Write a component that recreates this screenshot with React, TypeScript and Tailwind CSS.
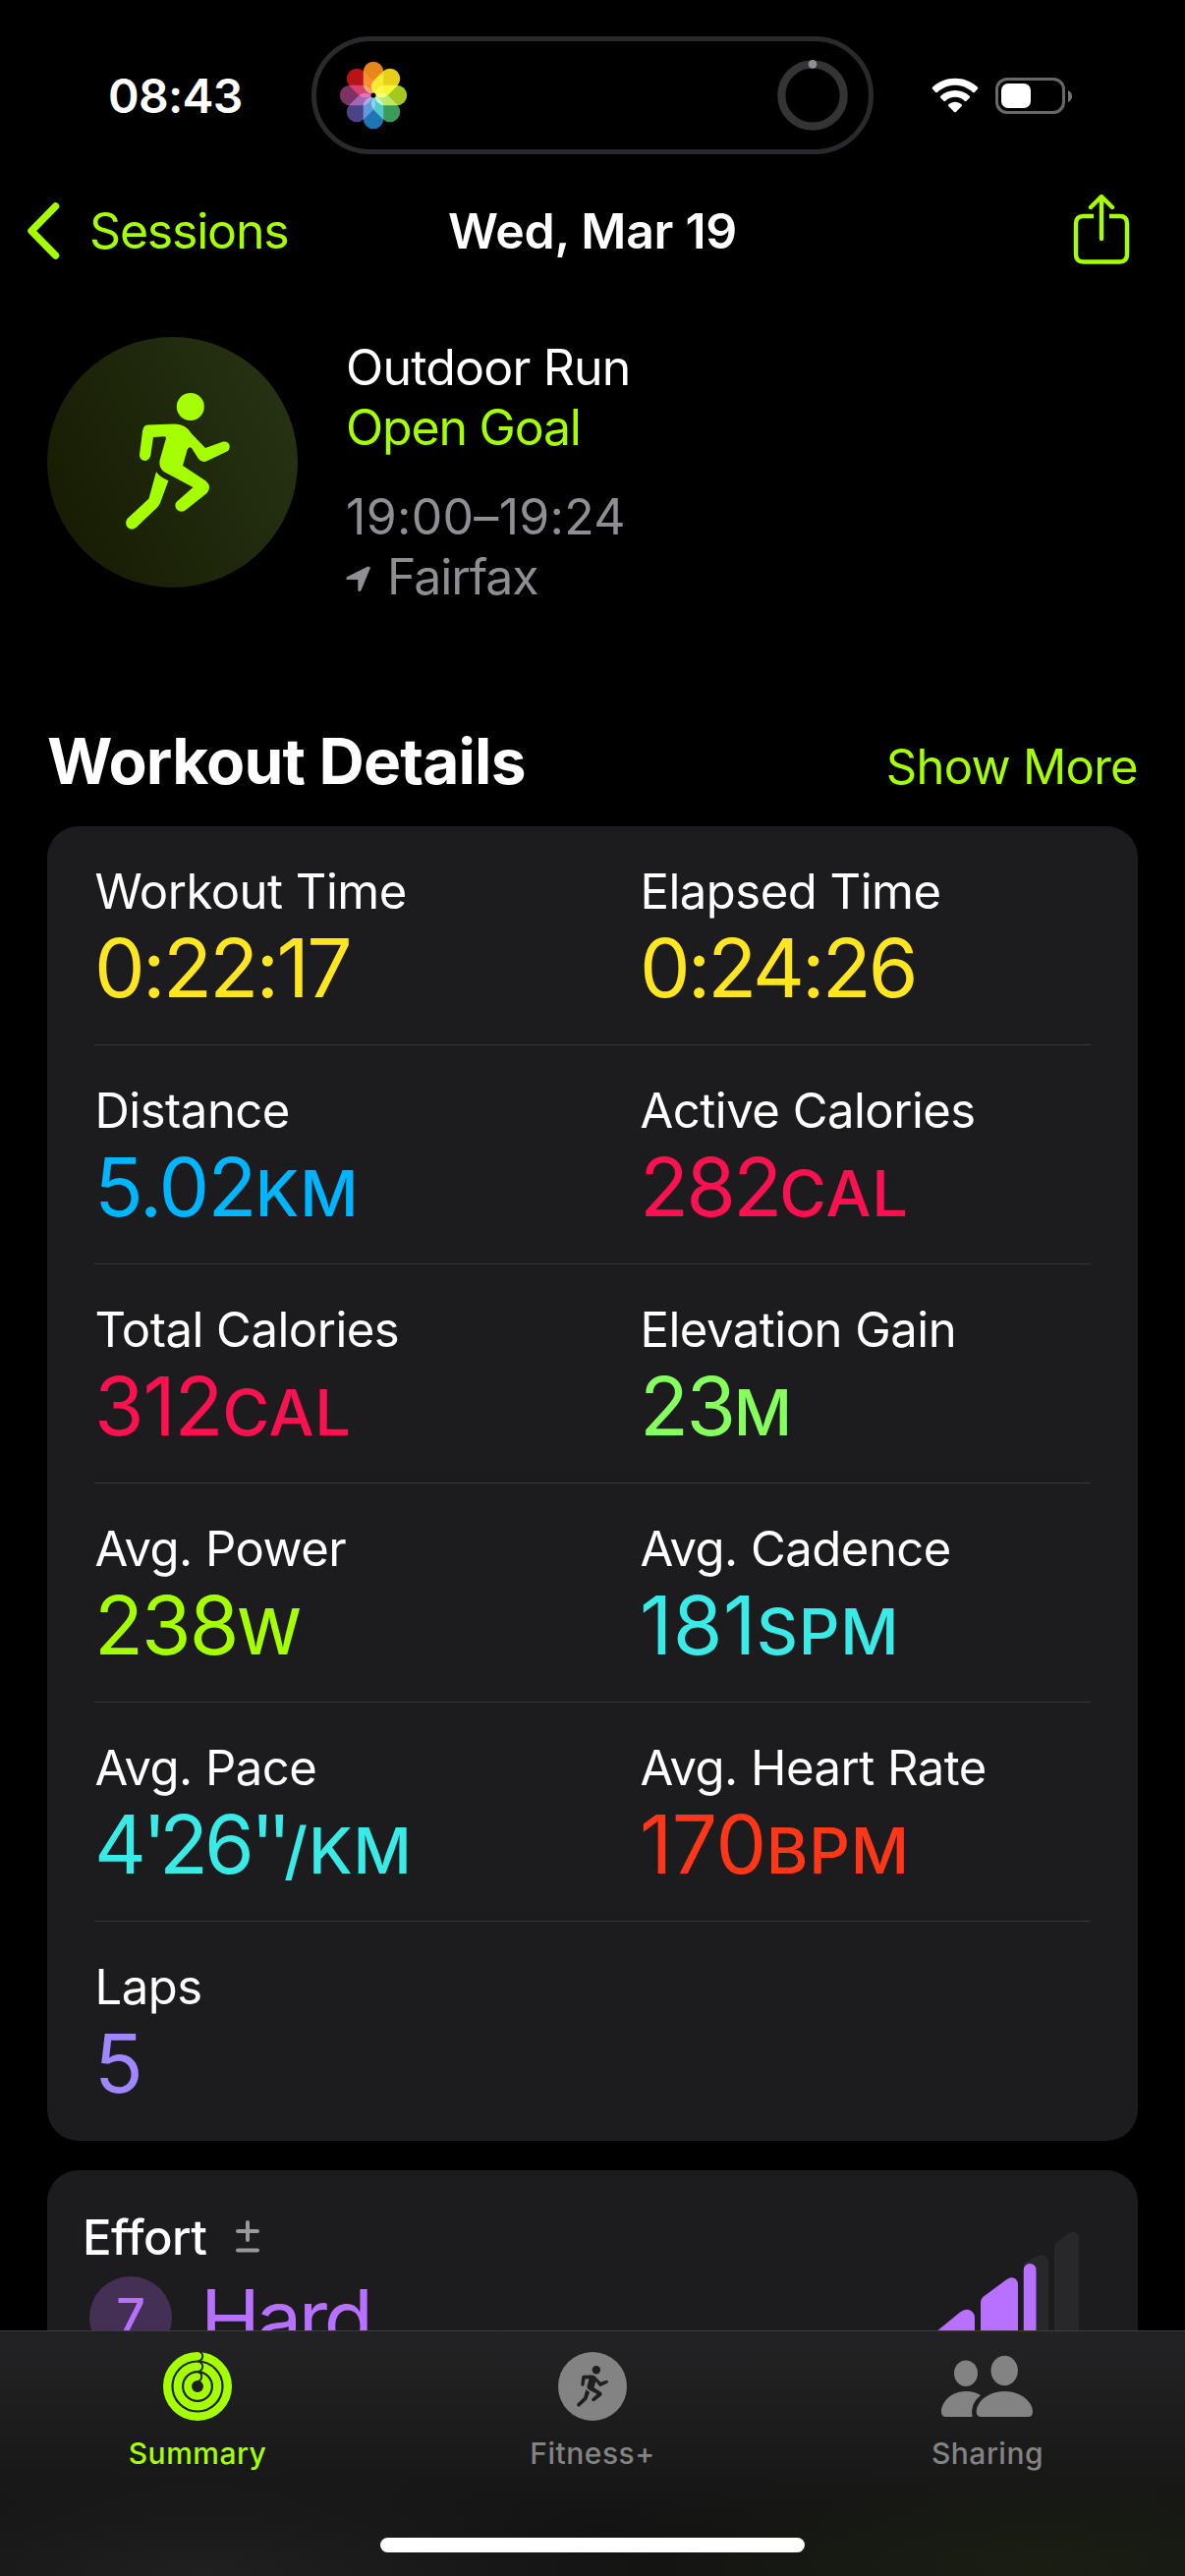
import clsx from "clsx"

const RUNNER_BODY = "M147 434 Q148 432.5 150 432.4 L178 431.5 Q189 431.5 195 441.5 L209 456 L227 449.6 Q232 448.500 233.500 453 Q234.500 457.500 231 459.500 L210 469.500 Q205 471 202 467 L195 456 Q192 454 190.500 458 L186 474 L209.500 489.500 Q216 495 210.500 502 L188.500 519.500 Q183 522.500 179.500 518 Q177 513.500 180 510.500 L196.500 496 L167.500 480.500 Q161 476 162.700 468 L169 446 Q169 444 167 444.200 L156 445 L153.200 464 Q151.500 469 147 469 Q142 468 142 463 L145 439 Q145.500 435.500 147 434 Z"
const RUNNER_LEG = "M159 480.300 Q163 486 171.400 489.300 L163 512 Q162 514.500 160 516.500 L138.500 537 Q134 540.500 130 537 Q126.500 532.500 129.500 528 L151.500 507.500 Z"

const metrics = [
    [
        { label: "Workout Time", value: "0:22:17", unit: "", color: "text-[#ffe620]", tracking: "tracking-[-2.7px]" },
        { label: "Elapsed Time", value: "0:24:26", unit: "", color: "text-[#ffe620]", tracking: "tracking-[-3px]" },
    ],
    [
        { label: "Distance", value: "5.02", unit: "KM", color: "text-[#00b5ff]", tracking: "tracking-[-1.8px]" },
        { label: "Active Calories", value: "282", unit: "CAL", color: "text-[#fa114f]", tracking: "tracking-[-2.8px]" },
    ],
    [
        { label: "Total Calories", value: "312", unit: "CAL", color: "text-[#fa114f]", tracking: "tracking-[-1.2px]" },
        { label: "Elevation Gain", value: "23", unit: "M", color: "text-[#86ff5e]", tracking: "tracking-[-2.5px]" },
    ],
    [
        { label: "Avg. Power", value: "238", unit: "W", color: "text-[#a6ff00]", tracking: "tracking-[-2px]" },
        { label: "Avg. Cadence", value: "181", unit: "SPM", color: "text-[#3aeae6]", tracking: "tracking-[0.5px]" },
    ],
    [
        { label: "Avg. Pace", value: "4'26''", unit: "/KM", color: "text-[#3aeae6]", tracking: "tracking-[-4px]" },
        { label: "Avg. Heart Rate", value: "170", unit: "BPM", color: "text-[#ff3718]", tracking: "tracking-[-0.5px]" },
    ],
    [
        { label: "Laps", value: "5", unit: "", color: "text-[#9f87ff]", tracking: "tracking-[-2px]" },
    ],
]

const petals = ["#e8861a", "#e8d01a", "#a5c820", "#3a9c58", "#1f74b4", "#4c4288", "#7c3262", "#b81418"]

function Runner(props: any) {
    return (
        <svg viewBox="128 400 106 140" className={props.className} fill="currentColor">
            <circle cx="193.800" cy="414" r="14" />
            <path d={RUNNER_BODY} />
            <path d={RUNNER_LEG} />
        </svg>
    )
}

function StatusBar() {
    return (
        <header className="flex h-[157px] pt-[37px]">
            <div className="w-[317px] pt-[32px] pl-[110px] text-[48px] leading-[58px] font-semibold tracking-[-0.7px]">08:43</div>
            <div className="flex h-[120px] w-[572px] items-center justify-between rounded-full border-[5px] border-[#2a2a2c] pr-[21px] pl-[23px]">
                <svg viewBox="-35 -35 70 70" className="size-[70px] isolate">
                    {petals.map((color, i) => (
                        <rect key={color} x="-10.300" y="-34.200" width="20.600" height="33" rx="10.300" fill={color}
                            transform={`rotate(${i * 45})`} className="mix-blend-screen" />
                    ))}
                    <circle r="2.500" fill="black" />
                </svg>
                <svg viewBox="-36 -36 72 72" className="size-[72px]" fill="none">
                    <circle r="31.700" stroke="#343435" strokeWidth="8.200" />
                    <circle cy="-31.700" r="4.400" fill="#8e8e93" />
                </svg>
            </div>
            <div className="flex pt-[42px] pl-[59px]">
                <svg viewBox="0 0 48 36" className="h-[36px] w-[48px]" fill="white">
                    <path d="M24 0.800 C33 0.800 41 4.200 47 9.800 Q47.800 10.700 47 11.600 L43.800 15 Q43 15.700 42.100 15 C37 10.200 30.700 7.700 24 7.700 C17.300 7.700 11 10.200 5.900 15 Q5 15.700 4.200 15 L1 11.600 Q0.200 10.700 1 9.800 C7 4.200 15 0.800 24 0.800 Z" />
                    <path d="M24 12.900 C29.600 12.900 34.800 15 38.800 18.700 Q39.700 19.600 38.800 20.500 L35.600 23.800 Q34.700 24.500 33.800 23.800 C31.100 21.300 27.700 19.800 24 19.800 C20.300 19.800 16.900 21.300 14.200 23.800 Q13.300 24.500 12.400 23.800 L9.200 20.500 Q8.300 19.600 9.200 18.700 C13.200 15 18.400 12.900 24 12.900 Z" />
                    <path d="M24 24.800 C26.500 24.800 28.800 25.700 30.600 27.200 Q31.500 28 30.700 28.900 L24.900 34.900 Q24 35.700 23.100 34.900 L17.300 28.900 Q16.500 28 17.400 27.200 C19.200 25.700 21.500 24.800 24 24.800 Z" />
                </svg>
                <div className="ml-[17px] flex h-[37px] w-[71px] rounded-[12px] border-[3px] border-[#686868] p-[3px]">
                    <div className="w-[30px] rounded-[7px] bg-white" />
                </div>
                <svg viewBox="0 0 4 12" className="mt-[13px] ml-[3px] h-[12px] w-[4px]"><path d="M0 0 Q4 2 4 6 Q4 10 0 12 Z" fill="#757575" /></svg>
            </div>
        </header>
    )
}

function NavBar() {
    return (
        <nav className="grid h-[155px] grid-cols-[400px_406px_400px] items-center text-[50px] leading-[60px]">
            <div className="flex items-center pl-[27px] text-[#a6ff00]">
                <svg viewBox="0 0 34 58" className="h-[58px] w-[34px]" fill="none">
                    <path d="M29.500 4 L5 29 L29.500 54" stroke="currentColor" strokeWidth="7.500" strokeLinecap="round" strokeLinejoin="round" />
                </svg>
                <span className="ml-[30px] tracking-[-1.2px]">Sessions</span>
            </div>
            <h1 className="text-center font-semibold tracking-[-0.3px]">Wed, Mar 19</h1>
            <svg viewBox="0 0 58 72" className="mb-[4px] ml-[286px] h-[72px] w-[58px] text-[#a6ff00]" fill="none" stroke="currentColor" strokeWidth="4.400">
                <path d="M21 23 H10.500 Q3 23 3 30.500 V62 Q3 69.500 10.500 69.500 H47.500 Q55 69.500 55 62 V30.500 Q55 23 47.500 23 H37" />
                <path d="M29 46 V3.500 M18 14 L29 3 L40 14" strokeLinecap="round" strokeLinejoin="round" />
            </svg>
        </nav>
    )
}

function WorkoutSummary() {
    return (
        <section className="mt-[31px] flex h-[255px] pl-[48px]">
            <div className="size-[255px] rounded-full bg-linear-[65deg] from-[#151900] to-[#283516] pt-[57px] pl-[80px]">
                <Runner className="h-[140px] w-[106px] text-[#a6ff00]" />
            </div>
            <div className="mt-[1px] ml-[49px] text-[50px] leading-[61px]">
                <p className="tracking-[-0.8px]">Outdoor Run</p>
                <p className="tracking-[-1.2px] text-[#a6ff00]">Open Goal</p>
                <p className="mt-[30px] tracking-[0.3px] text-[#8e8e93]">19:00–19:24</p>
                <p className="flex items-center text-[#8e8e93]">
                    <svg viewBox="0 0 25 26" className="mt-[3px] mr-[17px] h-[26px] w-[25px]" fill="currentColor">
                        <path d="M1.500 11 L22 0.800 Q25.500 0 24.500 3 L15.500 25 Q13.500 27.500 12.300 24.500 V14 H1.500 Q-1 13 1.500 11 Z" />
                    </svg>
                    <span className="tracking-[-1.1px]">Fairfax</span>
                </p>
            </div>
        </section>
    )
}

function Metric(props: any) {
    return (
        <div className="w-[555px] shrink-0 pt-[37px]">
            <h3 className="pl-[0.500px] text-[49px] leading-[60px] tracking-[-0.5px]">{props.label}</h3>
            <p className={clsx("flex items-baseline text-[82px] leading-[96px]", props.color, props.tracking)}>
                {/* prime marks sit tighter than the digits */}
                {props.value.split(/('+)/).filter(Boolean).map((part: string, i: number) => (
                    <span key={i} className={part.startsWith("'") ? "tracking-[-7.5px]" : ""}>{part}</span>
                ))}
                <span className="text-[65px] font-medium tracking-[0.8px]">{props.unit}</span>
            </p>
        </div>
    )
}

function Effort() {
    return (
        <section className="mt-[30px] flex h-[300px] rounded-[32px] bg-[#1c1c1e] pl-[38px]">
            <div className="w-[846px]">
                <div className="flex pt-[39px]">
                    <h3 className="-ml-[2px] text-[49px] leading-[60px] font-medium tracking-[-0.5px]">Effort</h3>
                    <svg viewBox="0 0 24 34" className="mt-[11px] ml-[29px] h-[34px] w-[24px]" fill="none" stroke="#98989d" strokeWidth="4" strokeLinecap="round">
                        <path d="M12 3 V21 M2 12 H22 M2 31.500 H22" />
                    </svg>
                </div>
                <div className="mt-[9px] flex text-[#b871ff]">
                    <div className="ml-[5px] flex size-[84px] items-center justify-center rounded-full bg-[#443055] text-[52px] font-medium">7</div>
                    <p className="mt-[2px] ml-[29px] text-[82px] leading-[84px] tracking-[-3.6px]">Hard</p>
                </div>
            </div>
            <svg viewBox="932 2209 226 200" className="h-[200px] w-[226px]" fill="#b871ff">
                <path d="M935 2388 L977 2353.500 Q983 2349 988 2352 Q992 2354.500 992 2359 V2400 H935 Z" />
                <path d="M998 2400 V2344 Q998 2340 1001 2337.500 L1024 2320.500 Q1030 2316.500 1034 2320 Q1036 2322 1036 2326 V2400 Z" />
                <path d="M1042 2400 V2304 L1054 2297 Q1061 2293 1065 2297 Q1067 2299.500 1067 2303 V2400 Z" fill="#28282a" />
                <path d="M1073 2400 V2288 Q1073 2284 1076 2282 L1086 2274 Q1092 2270 1096 2273.500 Q1098 2275 1098 2279 V2400 Z" fill="#28282a" />
                <rect x="1041.800" y="2304" width="12.700" height="100" rx="6.300" />
            </svg>
        </section>
    )
}

function RingsIcon() {
    return (
        <svg viewBox="-35 -35 70 70" className="size-[70px]" fill="none" stroke="currentColor">
            <circle r="30.800" strokeWidth="8.400" />
            <circle r="20.200" strokeWidth="8.400" />
            <circle r="9.900" strokeWidth="7.800" />
            <path d="M0 -36 A5.200 5.200 0 0 1 0 -25.600 M0 -25.400 A5.200 5.200 0 0 1 0 -15 M0 -15 A5.200 5.200 0 0 1 0 -4.800" stroke="#212122" strokeWidth="2" />
        </svg>
    )
}

function SharingIcon() {
    return (
        <svg viewBox="958 2394 94 70" className="h-[70px] w-[94px]" fill="currentColor">
            <ellipse cx="983" cy="2415.700" rx="12" ry="13.200" />
            <ellipse cx="1022.200" cy="2413" rx="13.700" ry="15.200" />
            <path d="M998 2438 Q992 2434 983 2434 C968 2434 958 2445 958 2455 Q958 2460 963 2460 H989.500 Q987 2447 998 2438 Z" />
            <path d="M1022.300 2434 C1005 2434 993.700 2445 993.700 2455 Q993.700 2460 999 2460 H1046 Q1051 2460 1051 2455 C1051 2445 1039 2434 1022.300 2434 Z" />
        </svg>
    )
}

function TabBar() {
    return (
        <footer className="absolute inset-x-0 bottom-0 h-[250px] border-t border-[#3b3b3d] bg-[radial-gradient(ellipse_at_88%_95%,#1a1e13_0%,#1a1e1300_32%),radial-gradient(ellipse_at_17%_100%,#202020_0%,#20202000_32%),linear-gradient(#232325,#1b1b1b_45%,#131313_80%)] text-[30px] leading-[36px] font-medium tracking-[0.5px] text-[#838383]">
            <div className="grid h-[210px] grid-cols-3 pt-[21px]">
                <div className="flex flex-col items-center gap-[15px] text-[#a6ff00]">
                    <RingsIcon />
                    Summary
                </div>
                <div className="flex flex-col items-center gap-[15px]">
                    <div className="flex size-[70px] items-center justify-center rounded-full bg-[#838383]">
                        <Runner className="h-[42px] w-[32px] text-[#1e1e1e]" />
                    </div>
                    Fitness+
                </div>
                <div className="flex flex-col items-center gap-[15px]">
                    <SharingIcon />
                    Sharing
                </div>
            </div>
            <div className="mx-auto h-[15px] w-[432px] rounded-full bg-white" />
        </footer>
    )
}

export default function App() {
    return (
        <div className="relative h-[2622px] w-[1206px] overflow-hidden bg-black font-['Inter',sans-serif] text-white">
            <StatusBar />
            <NavBar />
            <WorkoutSummary />
            <main className="mx-[48px] mt-[136px]">
                <div className="flex h-[107px] items-baseline justify-between">
                    <h2 className="mt-[1px] text-[64px] leading-[80px] font-bold tracking-[-0.8px]">Workout Details</h2>
                    <a className="text-[49px] tracking-[-0.700px] text-[#a6ff00]">Show More</a>
                </div>
                <section className="rounded-[32px] bg-[#1c1c1e] px-[48px]">
                    {metrics.map((row, i) => (
                        <div key={i} className="flex h-[223px] border-b border-[#38383a] last:border-0">
                            {row.map((m) => <Metric key={m.label} {...m} />)}
                        </div>
                    ))}
                </section>
                <Effort />
            </main>
            <TabBar />
        </div>
    )
}
